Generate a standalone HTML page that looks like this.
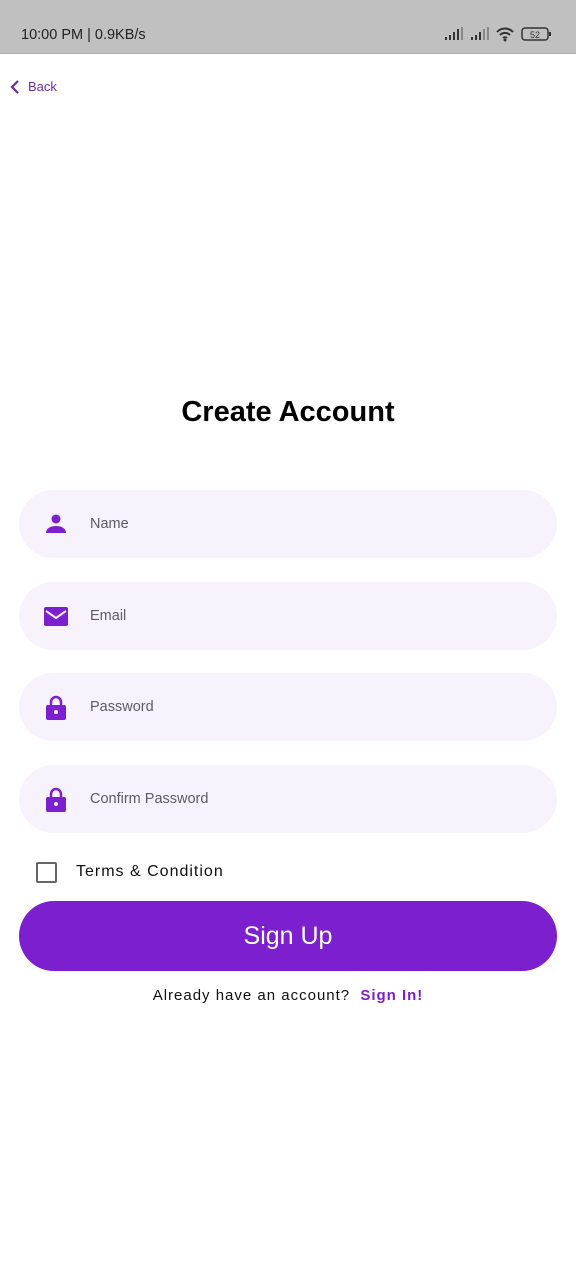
<!DOCTYPE html>
<html><head><meta charset="utf-8"><style>
*{margin:0;padding:0;box-sizing:border-box}
body{width:576px;height:1280px;background:#fff;font-family:"Liberation Sans",sans-serif;position:relative;overflow:hidden}
.sb{position:absolute;left:0;top:0;width:576px;height:54px;background:#c0c0c0;border-bottom:1px solid #b3b3b3}
.sb .t{position:absolute;left:21px;top:27px;font-size:14.5px;color:#222}
.back{position:absolute;left:9px;top:79px;color:#6a2bb0;font-size:13px}
.back span{position:absolute;left:19px;top:0}
h1{position:absolute;left:0;width:576px;top:396px;text-align:center;font-size:29px;font-weight:bold;color:#000}
.f{position:absolute;left:19px;width:538px;height:68px;border-radius:34px;background:#f8f2fd}
.f svg{position:absolute;left:25px;top:22px}
.f span{position:absolute;left:71px;top:26px;font-size:14.5px;color:#5e5a66}
.cb{position:absolute;left:36px;top:862px;width:21px;height:21px;border:2px solid #666;border-radius:2px}
.tc{position:absolute;left:76px;top:863px;font-size:16px;letter-spacing:1px;color:#111}
.btn{position:absolute;left:19px;top:901px;width:538px;height:70px;border-radius:35px;background:#7b1fcf;color:#fff;font-size:25px;text-align:center;line-height:70px}
.al{position:absolute;left:0;width:576px;top:987px;text-align:center;font-size:15px;letter-spacing:1px;color:#111}
.al b{color:#7b1fcf;margin-left:5px}
</style></head><body>
<div class="sb"><div class="t">10:00 PM | 0.9KB/s</div>
<svg style="position:absolute;left:444px;top:26px" width="110" height="18" viewBox="0 0 110 18">
<g fill="#333"><rect x="1" y="11" width="2" height="3"/><rect x="5" y="9" width="2" height="5"/><rect x="9" y="6" width="2" height="8"/><rect x="13" y="3" width="2" height="11"/><rect x="17" y="1" width="2" height="13" fill="#888"/>
<rect x="27" y="11" width="2" height="3"/><rect x="31" y="9" width="2" height="5"/><rect x="35" y="6" width="2" height="8"/><rect x="39" y="3" width="2" height="11" fill="#888"/><rect x="43" y="1" width="2" height="13" fill="#888"/></g>
<path d="M53 6a11 11 0 0 1 16 0M56 9a7 7 0 0 1 10 0M59 12a3 3 0 0 1 4 0" stroke="#333" stroke-width="2" fill="none"/><circle cx="61" cy="14" r="1.5" fill="#333"/>
<rect x="78" y="2" width="26" height="12" rx="3" fill="none" stroke="#333" stroke-width="1.5"/><rect x="105" y="6" width="2" height="4" fill="#333"/>
<text x="91" y="12" font-size="9" text-anchor="middle" fill="#333" font-family="Liberation Sans">52</text></svg></div>
<div class="back"><svg width="12" height="16" viewBox="0 0 12 16"><path d="M9 2L3 8l6 6" stroke="#6a2bb0" stroke-width="2.2" fill="none"/></svg><span>Back</span></div>
<h1>Create Account</h1>
<div class="f" style="top:490px"><svg width="24" height="24" viewBox="0 0 24 24"><circle cx="12" cy="7" r="4.5" fill="#7b1fcf"/><path d="M2 21c0-5 5-7 10-7s10 2 10 7z" fill="#7b1fcf"/></svg><span>Name</span></div>
<div class="f" style="top:582px"><svg width="24" height="24" viewBox="0 0 24 24"><rect x="0" y="3" width="24" height="19" rx="2" fill="#7b1fcf"/><path d="M2 7l10 7 10-7" stroke="#f8f2fd" stroke-width="2" fill="none"/></svg><span>Email</span></div>
<div class="f" style="top:673px"><svg width="24" height="26" viewBox="0 0 24 26"><path d="M7 11V7a5 5 0 0 1 10 0v4" stroke="#7b1fcf" stroke-width="2.5" fill="none"/><rect x="2" y="10" width="20" height="15" rx="2" fill="#7b1fcf"/><circle cx="12" cy="17" r="2" fill="#f8f2fd"/></svg><span>Password</span></div>
<div class="f" style="top:765px"><svg width="24" height="26" viewBox="0 0 24 26"><path d="M7 11V7a5 5 0 0 1 10 0v4" stroke="#7b1fcf" stroke-width="2.5" fill="none"/><rect x="2" y="10" width="20" height="15" rx="2" fill="#7b1fcf"/><circle cx="12" cy="17" r="2" fill="#f8f2fd"/></svg><span>Confirm Password</span></div>
<div class="cb"></div><div class="tc">Terms &amp; Condition</div>
<div class="btn">Sign Up</div>
<div class="al">Already have an account? <b>Sign In!</b></div>
</body></html>
